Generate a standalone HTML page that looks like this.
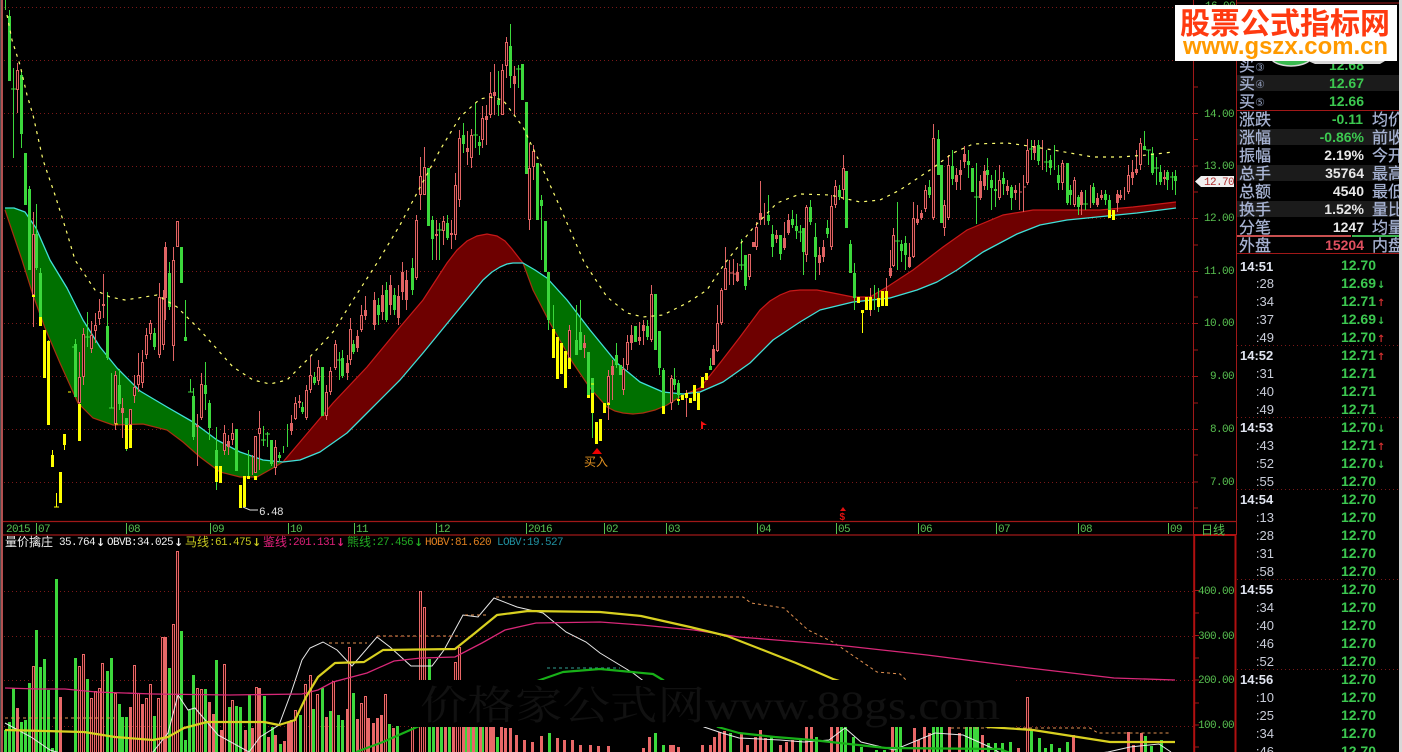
<!DOCTYPE html>
<html lang="zh">
<head>
<meta charset="utf-8">
<title>量价擒庄</title>
<style>
html,body{margin:0;padding:0;background:#000;width:1402px;height:752px;overflow:hidden}
svg{display:block}
text{white-space:pre}
.m{font-family:"Liberation Mono","DejaVu Sans Mono",monospace;font-size:11px;letter-spacing:-.6px}
.ar{font-family:"DejaVu Sans",sans-serif;font-size:11px;font-weight:bold}
.ax{fill:#58c050}
.c{font-family:"Liberation Sans","WenQuanYi Zen Hei","Noto Sans CJK SC",sans-serif;font-size:16px;fill:#a8b4d4;stroke:#a8b4d4;stroke-width:.25px}
.c12{font-family:"Liberation Sans","Noto Sans CJK SC",sans-serif;font-size:12px}
.v{font-family:"Liberation Sans",sans-serif;font-weight:bold;font-size:14px;text-anchor:end}
.t{font-family:"Liberation Sans",sans-serif;font-weight:bold;font-size:13px;fill:#e0e4f0}
.s{font-family:"Liberation Sans",sans-serif;font-size:13px;fill:#c8ccd8;text-anchor:end}
.p{font-family:"Liberation Sans",sans-serif;font-weight:bold;font-size:14px;fill:#3cc850;text-anchor:end}
.ad{font-family:"DejaVu Sans",sans-serif;font-weight:bold;font-size:10px;fill:#3cc850}
.au{font-family:"DejaVu Sans",sans-serif;font-weight:bold;font-size:10px;fill:#d03030}
</style>
</head>
<body>
<svg xmlns="http://www.w3.org/2000/svg" width="1402" height="752" viewBox="0 0 1402 752">
<rect width="1402" height="752" fill="#000"/>

<!-- grid -->
<path d="M4 7.5H1193M4 60.5H1193M4 113.5H1193M4 166.5H1193M4 218.5H1193M4 271.5H1193M4 323.5H1193M4 376.5H1193M4 429.5H1193M4 482.5H1193M4 591.5H1193M4 636.5H1193M4 680.5H1193M4 726.5H1193" stroke="#7a1818" stroke-width="1" stroke-dasharray="1 3" fill="none"/>

<!-- ribbons -->
<polygon fill="#007000" points="5,208 14,208 25,212 36,228 50,260 67,288 83,320 100,347 117,368 140,391 167,407 193,422 217,440 240,452 263,460 283,462 273,468 257,477 240,477 220,472 200,457 183,442 167,430 143,424 113,425 93,418 78,403 60,363 45,328 33,295 22,260 5,210"/>
<polygon fill="#6e0000" points="283,462 300,442 333,403 367,367 400,327 423,300 447,263 457,250 467,241 477,236 487,234 497,236 505,241 512,249 519,258 523,263 513,263 507,264 500,267 492,272 483,280 450,320 423,353 400,380 367,413 347,433 320,452 300,460"/>
<polygon fill="#007000" points="523,263 535,270 547,278 567,300 590,330 617,363 640,382 663,392 683,394 683,395 667,405 655,410 643,413 633,414 623,413 615,411 607,407 590,388 573,363 550,323 533,290"/>
<polygon fill="#6e0000" points="683,395 700,388 720,363 740,337 760,310 770,301 780,295 790,291 800,290 817,290 833,293 853,297 870,297 887,287 913,270 943,247 967,230 1003,215 1033,210 1067,210 1100,210 1133,207 1176,202 1176,208 1137,213 1107,216 1067,220 1040,225 1017,234 983,252 957,270 937,282 917,290 890,298 853,302 820,310 800,322 773,340 750,363 723,382 700,392 683,394"/>
<polyline fill="none" stroke="#a83010" stroke-width="1.2" points="5,210 22,260 33,295 45,328 60,363 78,403 93,418 113,425 143,424 167,430 183,442 200,457 220,472 240,477 257,477 273,468 283,462"/>
<polyline fill="none" stroke="#c81818" stroke-width="1.2" points="283,462 300,442 333,403 367,367 400,327 423,300 447,263 457,250 467,241 477,236 487,234 497,236 505,241 512,249 519,258 523,263"/>
<polyline fill="none" stroke="#a83010" stroke-width="1.2" points="523,263 533,290 550,323 573,363 590,388 607,407 615,411 623,413 633,414 643,413 655,410 667,405 683,395"/>
<polyline fill="none" stroke="#c81818" stroke-width="1.2" points="683,395 700,388 720,363 740,337 760,310 770,301 780,295 790,291 800,290 817,290 833,293 853,297 870,297 887,287 913,270 943,247 967,230 1003,215 1033,210 1067,210 1100,210 1133,207 1176,202"/>
<polyline fill="none" stroke="#40e0d8" stroke-width="1.3" stroke-linejoin="round" points="5,208 14,208 25,212 36,228 50,260 67,288 83,320 100,347 117,368 140,391 167,407 193,422 217,440 240,452 263,460 283,462 300,460 320,452 347,433 367,413 400,380 423,353 450,320 483,280 492,272 500,267 507,264 513,263 523,263 535,270 547,278 567,300 590,330 617,363 640,382 663,392 683,394 700,392 723,382 750,363 773,340 800,322 820,310 853,302 890,298 917,290 937,282 957,270 983,252 1017,234 1040,225 1067,220 1107,216 1137,213 1176,208"/>

<!-- wicks green -->
<path fill="none" stroke="#3cd83c" stroke-width="1" d="M5.5 0V10M9.5 10V81M13.5 68V158M11 89H16M21.5 71V148M29.5 186V270M36.5 204V270M40.5 268V317M48.5 340V350M75.5 339V397M72 347H77M87.5 312V347M85 337H90M107.5 292V360M111.5 373V408M109 408H114M119.5 369V410M126.5 418V451M154.5 328V350M169.5 262V310M185.5 300V340M190.5 379V392M188 392H193M193.5 388V440M205.5 362V410M209.5 400V440M216.5 427V490M248.5 450V476M263.5 426V446M261 440H266M267.5 432V447M265 434H270M271.5 440V466M279.5 452V462M283.5 446V453M287.5 424V447M302.5 402V414M314.5 372V385M339.5 352V380M337 360H342M342.5 350V378M353.5 340V354M374.5 295V330M378.5 298V325M386.5 282V322M394.5 288V315M412.5 258V295M432.5 216V260M439.5 223V260M437 230H442M447.5 215V240M463.5 123V153M475.5 103V148M473 135H478M479.5 136V155M498.5 71V116M510.5 24V88M518.5 65V88M516 69H521M541.5 195V260M548.5 272V330M553.5 305V330M576.5 305V355M580.5 300V350M592.5 378V438M616.5 343V368M635.5 326V342M647.5 320V340M659.5 331V375M663.5 368V414M674.5 368V390M678.5 380V405M710.5 358V370M741.5 239V270M739 265H744M745.5 255V290M768.5 195V225M772.5 225V257M780.5 235V260M792.5 210V228M796.5 214V239M800.5 225V242M798 232H803M803.5 228V275M810.5 200V225M815.5 223V280M827.5 220V238M839.5 185V200M850.5 240V273M854.5 263V310M874.5 285V310M878.5 288V312M897.5 202V270M895 241H900M901.5 240V262M905.5 236V270M929.5 180V198M938.5 130V175M941.5 165V223M952.5 150V185M968.5 150V178M976.5 163V224M974 197H979M987.5 158V190M991.5 175V210M995.5 170V207M1003.5 172V195M1011.5 185V210M1031.5 140V160M1029 149H1034M1038.5 140V165M1046.5 150V172M1044 162H1049M1050.5 155V175M1054.5 145V170M1058.5 165V190M1067.5 163V205M1070.5 185V205M1078.5 195V215M1085.5 190V210M1083 204H1088M1093.5 183V205M1105.5 190V205M1109.5 195V210M1144.5 131V150M1148.5 150V165M1146 150H1151M1152.5 147V175M1156.5 157V185M1154 168H1159M1160.5 165V185M1167.5 170V190M1172.5 172V190M1170 177H1175M1175.5 170V195"/>
<!-- bodies green -->
<path fill="none" stroke="#3cd83c" stroke-width="3" d="M9.5 16V81M21.5 75V134M25.5 153V205M29.5 189V270M36.5 234V268M40.5 273V317M75.5 344V397M107.5 326V358M119.5 385V404M126.5 418V425M154.5 333V347M169.5 273V307M181.5 247V283M185.5 337V341M193.5 396V437M205.5 385V394M209.5 403V428M216.5 450V466M236.5 429V471M271.5 440V464M279.5 455V458M302.5 407V412M314.5 377V383M322.5 367V416M342.5 358V376M353.5 344V352M378.5 305V315M386.5 290V320M394.5 295V310M412.5 268V290M428.5 168V226M432.5 220V239M447.5 223V238M463.5 135V144M479.5 142V146M498.5 100V105M510.5 46V76M522.5 64V100M526.5 102V174M537.5 163V220M541.5 200V206M545.5 221V272M548.5 272V320M576.5 340V355M580.5 332V350M588.5 352V395M592.5 378V395M616.5 355V365M620.5 365V375M635.5 326V342M647.5 326V337M655.5 294V350M659.5 331V368M663.5 370V406M674.5 379V385M678.5 383V395M710.5 366V370M745.5 255V286M768.5 215V221M772.5 234V247M780.5 235V254M792.5 219V225M796.5 226V231M803.5 228V252M810.5 207V222M815.5 237V257M827.5 228V234M839.5 190V197M846.5 171V228M850.5 244V273M854.5 273V298M901.5 244V251M905.5 243V255M929.5 187V195M938.5 139V175M941.5 165V223M952.5 166V179M968.5 161V165M972.5 168V192M987.5 170V175M991.5 180V188M995.5 189V191M1003.5 178V184M1011.5 187V198M1038.5 145V161M1050.5 160V168M1058.5 175V183M1067.5 163V203M1070.5 190V195M1078.5 197V207M1093.5 187V203M1105.5 194V200M1109.5 200V210M1144.5 146V150M1152.5 153V173M1160.5 172V182M1167.5 172V180M1175.5 176V181"/>

<!-- red -->
<path fill="none" stroke="#e06464" stroke-width="1" d="M17.5 63V113M33.5 212V327M79.5 352V412M83.5 328V385M91.5 321V353M95.5 313V343M99.5 299V325M103.5 274V318M115.5 371V430M122.5 398V438M134.5 375V403M138.5 353V392M142.5 350V388M146.5 328V359M150.5 320V340M159.5 283V358M163.5 290V350M165.5 242V320M173.5 247V361M197.5 414V466M201.5 373V420M224.5 425V455M228.5 435V455M232.5 423V445M252.5 455V475M259.5 411V470M275.5 440V475M291.5 415V435M295.5 397V420M299.5 395V408M306.5 385V420M310.5 357V393M318.5 360V385M326.5 385V420M330.5 367V395M335.5 340V370M347.5 355V380M350.5 318V365M357.5 330V352M361.5 305V332M365.5 296V320M374.5 292V330M382.5 285V320M390.5 275V315M398.5 285V325M402.5 262V300M406.5 270V310M416.5 215V280M420.5 157V210M424.5 147V195M436.5 220V260M443.5 216V245M451.5 220V249M455.5 173V240M459.5 130V207M467.5 131V165M471.5 129V168M482.5 106V148M486.5 105V145M490.5 72V118M494.5 64V115M502.5 64V115M506.5 37V78M514.5 66V115M529.5 143V230M533.5 145V180M569.5 325V358M584.5 335V358M608.5 370V420M612.5 360V400M623.5 358V395M627.5 335V370M631.5 325V350M639.5 322V345M643.5 320V345M651.5 285V342M671.5 375V410M686.5 390V417M713.5 345V365M717.5 305V352M721.5 288V325M725.5 247V290M729.5 260V285M733.5 259V285M737.5 263V282M749.5 254V280M756.5 222V250M760.5 181V225M764.5 203V225M776.5 230V243M784.5 222V250M788.5 214V235M806.5 205V262M819.5 247V275M823.5 240V262M831.5 195V250M835.5 180V208M843.5 155V200M870.5 288V316M886.5 278V292M890.5 250V278M893.5 228V267M909.5 243V268M913.5 202V258M917.5 205V225M921.5 210V220M925.5 185V212M933.5 124V220M944.5 200V236M948.5 155V220M956.5 168V190M960.5 160V190M964.5 146V168M980.5 175V200M984.5 165V190M999.5 165V200M1007.5 180V195M1015.5 185V200M1019.5 183V210M1023.5 175V212M1027.5 139V185M1034.5 140V160M1042.5 140V170M1062.5 160V190M1074.5 177V207M1081.5 190V215M1090.5 185V208M1097.5 193V207M1101.5 190V200M1117.5 190V212M1120.5 190V200M1124.5 187V200M1128.5 165V194M1132.5 160V185M1136.5 150V175M1140.5 138V170M1164.5 170V185M729 273H733M733 274H737M1019 192H1022M1023 187H1026"/>
<path fill="none" stroke="#e06464" stroke-width="3" d="M17.5 70V90M33.5 234V295M79.5 377V403M83.5 334V377M91.5 335V349M95.5 325V331M99.5 311V319M103.5 304V306M115.5 375V424M122.5 408V413M130.5 409V425M134.5 387V396M138.5 375V385M142.5 362V383M146.5 335V355M150.5 323V334M159.5 297V355M163.5 297V345M165.5 247V298M173.5 260V346M177.5 221V247M197.5 425V427M201.5 384V418M224.5 433V451M228.5 441V447M232.5 433V440M255.5 436V473M259.5 428V434M275.5 447V468M291.5 423V431M295.5 403V419M299.5 401V403M306.5 390V418M310.5 375V390M318.5 367V381M326.5 392V416M330.5 371V392M335.5 344V368M347.5 363V373M350.5 329V360M357.5 336V348M361.5 315V330M365.5 310V316M374.5 300V325M382.5 295V312M390.5 285V305M398.5 296V318M402.5 272V292M406.5 280V300M416.5 220V278M420.5 176V195M424.5 167V195M436.5 234V236M443.5 221V231M451.5 233V235M455.5 185V235M459.5 138V200M467.5 148V152M471.5 135V158M482.5 118V140M486.5 116V120M490.5 93V115M494.5 92V96M502.5 70V115M506.5 42V66M514.5 76V84M529.5 168V220M533.5 151V167M569.5 330V358M584.5 343V348M608.5 376V403M612.5 366V375M623.5 369V390M627.5 342V365M631.5 335V343M639.5 337V341M643.5 325V331M651.5 294V340M671.5 378V403M713.5 349V365M717.5 323V351M721.5 290V323M725.5 268V290M737.5 272V281M749.5 254V277M753.5 242V247M756.5 227V247M760.5 213V220M776.5 235V239M784.5 238V248M788.5 220V233M806.5 207V255M819.5 255V263M823.5 247V257M831.5 206V247M835.5 186V205M843.5 168V190M890.5 268V276M893.5 235V266M909.5 257V267M913.5 218V257M917.5 219V223M921.5 213V218M925.5 190V209M933.5 138V218M944.5 205V228M948.5 165V218M956.5 175V182M960.5 170V175M964.5 154V162M980.5 181V198M984.5 171V186M999.5 180V198M1007.5 186V191M1015.5 190V193M1027.5 150V183M1034.5 146V153M1062.5 163V183M1074.5 180V205M1081.5 192V205M1097.5 198V205M1101.5 195V198M1117.5 194V203M1120.5 195V198M1128.5 175V192M1132.5 172V178M1136.5 169V173M1140.5 143V165M1164.5 177V179"/>
<path fill="none" stroke="#200000" stroke-width="1" d="M17.5 71V89M33.5 235V294M79.5 378V402M83.5 335V376M91.5 336V348M95.5 326V330M99.5 312V318M115.5 376V423M130.5 410V424M134.5 388V395M138.5 376V384M142.5 363V382M146.5 336V354M150.5 324V333M159.5 298V354M163.5 298V344M173.5 261V345M177.5 222V246M201.5 385V417M224.5 434V450M232.5 434V439M255.5 437V472M259.5 429V433M275.5 448V467M295.5 404V418M306.5 391V417M310.5 376V389M318.5 368V380M326.5 393V415M330.5 372V391M335.5 345V367M350.5 330V359M361.5 316V329M416.5 221V277M420.5 177V194M424.5 168V194M443.5 222V230M455.5 186V234M459.5 139V199M471.5 136V157M482.5 119V139M490.5 94V114M502.5 71V114M506.5 43V65M529.5 169V219M533.5 152V166M569.5 331V357M608.5 377V402M623.5 370V389M627.5 343V364M651.5 295V339M671.5 379V402M717.5 324V350M721.5 291V322M725.5 269V289M749.5 255V276M756.5 228V246M806.5 208V254M831.5 207V246M835.5 187V204M843.5 169V189M893.5 236V265M913.5 219V256M925.5 191V208M933.5 139V217M944.5 206V227M948.5 166V217M999.5 181V197M1027.5 151V182M1062.5 164V182M1074.5 181V204M1128.5 176V191M1140.5 144V164"/>

<!-- yellow -->
<path fill="none" stroke="#ffff00" stroke-width="1" d="M56.5 493V507M54 507H59M64.5 445V450M862.5 310V333M52.5 450V467M68 392H71M115 424H118M591 384H594"/>
<path fill="none" stroke="#ffff00" stroke-width="3" d="M33.5 295V297M40.5 317V326M44.5 330V378M48.5 341V425M52.5 455V467M60.5 472V503M64.5 434V445M79.5 404V441M126.5 425V449M130.5 425V448M216.5 466V482M220.5 466V483M240.5 485V508M244.5 476V507M248.5 476V479M255.5 476V480M553.5 329V358M557.5 337V379M561.5 343V374M565.5 351V388M569.5 358V369M588.5 395V398M592.5 393V413M596.5 422V444M600.5 419V441M604.5 403V413M608.5 403V405M663.5 406V414M678.5 399V401M682.5 395V400M686.5 393V398M690.5 398V403M694.5 385V401M698.5 393V410M702.5 377V388M706.5 373V380M858.5 297V303M862.5 310V313M866.5 297V310M870.5 297V310M878.5 298V307M882.5 291V306M886.5 291V306M1109.5 210V218M1113.5 210V220"/>

<!-- MA dotted -->
<polyline fill="none" stroke="#ffff70" stroke-width="1.2" stroke-dasharray="3 5" points="7,15 12,40 20,65 27,95 33,115 43,160 55,195 67,233 75,260 95,290 110,297 125,300 157,295 177,307 200,330 233,367 253,380 270,384 287,380 307,360 333,332 353,300 377,263 400,225 417,193 440,150 460,117 480,99 490,97 503,100 523,127 540,163 560,207 584,262 607,297 627,313 643,317 663,315 687,303 707,290 725,263 753,228 777,203 800,194 830,195 843,198 860,202 880,200 900,190 930,170 953,153 973,144 1007,143 1022,145 1053,150 1093,157 1120,157 1147,155 1173,152"/>

<!-- markers -->
<path d="M243 507L250 510H258" fill="none" stroke="#e0e0e0"/>
<text class="m" x="259" y="515" fill="#e0e0e0">6.48</text>
<polygon points="597,448 592,454 602,454" fill="#f00000"/>
<text class="c12" x="584" y="466" fill="#e09020">买入</text>
<polygon points="701,421 707,425 703,425 703,429 701,429" fill="#f01010"/>
<polygon points="843,507 840,511 846,511" fill="#e01010"/>
<text x="839.5" y="520" fill="#e01010" font-family="Liberation Sans,sans-serif" font-weight="bold" font-size="10">$</text>

<!-- volume green -->
<path fill="none" stroke="#3cd83c" stroke-width="3" d="M5.5 730V752M9.5 722V752M13.5 688V752M21.5 722V752M25.5 720V752M29.5 683V752M36.5 630V752M40.5 667V752M44.5 659V752M48.5 690V752M52.5 748V752M56.5 579V752M75.5 658V752M87.5 679V752M107.5 671V752M111.5 658V752M119.5 704V752M122.5 717V752M126.5 717V752M154.5 716V752M169.5 668V752M181.5 631V752M185.5 740V752M189.5 710V752M193.5 675V752M205.5 689V752M216.5 660V752M229.5 707V752M236.5 706V752M240.5 707V752M249.5 695V752M264.5 696V752M272.5 727V752M280.5 744V752M300.5 715V752M313.5 709V752M322.5 688V752M330.5 711V752M338.5 715V752M342.5 720V752M353.5 693V752M389.5 724V752M397.5 726V752M429.5 659V752M433.5 680V752M441.5 700V752M449.5 700V752M465.5 690V752M470.5 700V752M476.5 727V752M482.5 727V752M497.5 737V752M549.5 733V752M655.5 733V752M663.5 745V752M730.5 733V752M771.5 737V752M800.5 738V752M816.5 737V752M841.5 726V752M845.5 726V752M853.5 737V752M861.5 747V752M876.5 750V752M884.5 750V752M896.5 726V752M900.5 726V752M933.5 726V752M937.5 726V752M941.5 726V752M966.5 727V752M970.5 727V752M974.5 727V752M977.5 727V752M988.5 743V752M995.5 743V752M1002.5 743V752M1010.5 742V752M1031.5 730V752M1039.5 738V752M1045.5 748V752M1051.5 744V752M1059.5 748V752M1067.5 742V752M1145.5 736V752M1151.5 746V752M1161.5 740V752"/>
<!-- volume red -->
<path fill="none" stroke="#e86868" stroke-width="3" d="M17.5 708V752M33.5 666V752M60.5 697V752M79.5 666V752M83.5 654V752M91.5 698V752M95.5 691V752M99.5 688V752M102.5 663V752M115.5 693V752M130.5 707V752M134.5 665V752M138.5 693V752M142.5 704V752M146.5 698V752M150.5 684V752M158.5 698V752M162.5 637V752M165.5 637V752M173.5 624V752M177.5 551V752M197.5 688V752M201.5 689V752M209.5 702V752M213.5 714V752M221.5 730V752M224.5 664V752M232.5 700V752M245.5 730V752M252.5 728V752M256.5 687V752M259.5 688V752M268.5 737V752M275.5 735V752M284.5 741V752M288.5 722V752M291.5 720V752M295.5 710V752M305.5 684V752M310.5 675V752M317.5 694V752M326.5 717V752M333.5 681V752M347.5 709V752M349.5 647V752M357.5 719V752M361.5 703V752M365.5 696V752M368.5 718V752M373.5 723V752M377.5 718V752M381.5 715V752M385.5 694V752M393.5 728V752M412.5 703V752M420.5 591V752M424.5 607V752M437.5 680V752M445.5 700V752M453.5 700V752M455.5 662V752M459.5 647V752M463.5 700V752M468.5 700V752M473.5 690V752M480.5 700V752M486.5 700V752M490.5 690V752M493.5 690V752M501.5 720V752M505.5 728V752M510.5 728V752M516.5 735V752M524.5 740V752M532.5 742V752M541.5 736V752M557.5 738V752M564.5 740V752M572.5 740V752M580.5 745V752M590.5 745V752M598.5 746V752M608.5 746V752M643.5 748V752M649.5 737V752M670.5 745V752M673.5 745V752M678.5 747V752M702.5 745V752M710.5 745V752M714.5 737V752M719.5 732V752M724.5 731V752M741.5 734V752M747.5 745V752M755.5 737V752M760.5 730V752M765.5 738V752M780.5 745V752M786.5 742V752M792.5 740V752M806.5 726V752M811.5 726V752M831.5 726V752M837.5 726V752M892.5 726V752M914.5 728V752M918.5 740V752M924.5 726V752M929.5 733V752M949.5 726V752M959.5 733V752M982.5 735V752M1018.5 748V752M1027.5 697V752M1073.5 735V752M1128.5 732V752M1133.5 745V752M1141.5 733V752"/>
<path fill="none" stroke="#300000" stroke-width="1" d="M33.5 667V752M79.5 667V752M83.5 655V752M91.5 699V752M95.5 692V752M99.5 689V752M102.5 664V752M115.5 694V752M134.5 666V752M138.5 694V752M146.5 699V752M150.5 685V752M158.5 699V752M162.5 638V752M173.5 625V752M177.5 552V752M197.5 689V752M201.5 690V752M224.5 665V752M232.5 701V752M256.5 688V752M295.5 711V752M305.5 685V752M310.5 676V752M317.5 695V752M333.5 682V752M349.5 648V752M361.5 704V752M365.5 697V752M385.5 695V752M412.5 704V752M420.5 592V752M424.5 608V752M459.5 648V752M455.5 663V752M1027.5 698V752"/>

<!-- volume lines -->
<polyline fill="none" stroke="#e8e8e8" stroke-width="1" points="5,723 31,737 50,750 60,753 150,753 153,752 168,733 178,695 188,710 195,708 218,735 249,752 260,737 279,725 291,693 302,660 310,648 323,642 337,650 352,666 377,637 390,647 411,666 432,666 444,650 463,615 478,617 494,598 517,607 543,613 566,632 586,642 600,653 633,673 704,727 722,733 739,738 780,740 804,742 829,740 845,728 861,742 894,750 935,733 963,735 992,748 1000,753 1100,753 1108,752 1130,747 1159,744 1171,752"/>
<path fill="none" stroke="#e09050" stroke-width="1" stroke-dasharray="3 3" d="M5 718H115M329 643H367M377 636H459M465 615H486M496 597H743L751 603L784 608L808 630L833 642L877 672L900 674L906 680M951 728H1090L1098 733H1171"/>
<path fill="none" stroke="#30a090" stroke-width="1" stroke-dasharray="3 3" d="M547 668H620"/>
<polyline fill="none" stroke="#d82878" stroke-width="1.3" points="5,688 38,689 65,689 96,692 153,694 230,695 302,694 318,690 333,682 367,673 394,661 421,658 455,657 482,643 505,630 536,623 600,622 641,625 694,630 739,637 837,645 927,655 1029,668 1114,678 1175,680"/>
<polyline fill="none" stroke="#d8d020" stroke-width="2.2" stroke-linejoin="round" points="5,730 84,732 115,737 153,740 168,737 184,728 207,722 264,722 279,725 295,720 306,697 318,677 335,663 364,662 383,650 455,649 475,633 497,615 528,611 600,612 641,616 690,627 727,636 763,650 796,663 833,679 988,727 1033,730 1110,742 1175,742"/>
<polyline fill="none" stroke="#18b018" stroke-width="2.2" stroke-linejoin="round" points="356,752 383,742 417,727 540,680 563,672 600,669 653,674 663,680 718,727 739,733 775,737 812,740 886,748 1000,749 1010,753"/>

<!-- mask + watermark -->
<rect x="411" y="680" width="605" height="47" fill="#000"/>
<text x="420" y="719" font-family="Liberation Serif,Noto Serif CJK SC,serif" font-size="40" fill="#111" textLength="580" lengthAdjust="spacingAndGlyphs">价格家公式网www.88gs.com</text>

<!-- frame lines -->
<rect x="0" y="0" width="1" height="752" fill="#505050"/>
<rect x="1" y="0" width="2" height="752" fill="#b05050"/>
<path d="M3 521.5H1236M3 535H1193" stroke="#a01818" stroke-width="1.2" fill="none"/>
<path d="M1193 535H1236" stroke="#b01010" stroke-width="2" fill="none"/>
<path d="M1193.5 0V535M1236.5 0V535" stroke="#a01818" stroke-width="1" fill="none"/>
<path d="M1194.2 535V752M1235.5 535V752" stroke="#b01010" stroke-width="2" fill="none"/>
<path d="M1194 60.5H1198M1194 87H1198M1194 113.5H1198M1194 139.5H1198M1194 166H1198M1194 192H1198M1194 218.5H1198M1194 245H1198M1194 271.5H1198M1194 297H1198M1194 323.5H1198M1194 350H1198M1194 376.5H1198M1194 403H1198M1194 429.5H1198M1194 455H1198M1194 482H1198M1194 508H1198M1195 590.5H1199M1195 613H1199M1195 635.5H1199M1195 658H1199M1195 680H1199M1195 703H1199M1195 725H1199M1195 747H1199" stroke="#a01818" fill="none"/>

<!-- date axis -->
<path d="M36.5 523V534M126.5 523V534M210.5 523V534M288.5 523V534M354.5 523V534M436.5 523V534M526.5 523V534M604.5 523V534M666.5 523V534M757.5 523V534M836.5 523V534M918.5 523V534M996.5 523V534M1078.5 523V534M1168.5 523V534" stroke="#58c050" fill="none"/>
<text class="m ax" x="6" y="532">2015</text><text class="m ax" x="38" y="532">07</text><text class="m ax" x="128" y="532">08</text><text class="m ax" x="212" y="532">09</text><text class="m ax" x="290" y="532">10</text><text class="m ax" x="356" y="532">11</text><text class="m ax" x="438" y="532">12</text><text class="m ax" x="528" y="532">2016</text><text class="m ax" x="606" y="532">02</text><text class="m ax" x="668" y="532">03</text><text class="m ax" x="759" y="532">04</text><text class="m ax" x="838" y="532">05</text><text class="m ax" x="920" y="532">06</text><text class="m ax" x="998" y="532">07</text><text class="m ax" x="1080" y="532">08</text><text class="m ax" x="1170" y="532">09</text>
<text class="c12" x="1201" y="534" fill="#58c050">日线</text>

<!-- y axis labels -->
<text class="m ax" x="1204" y="117">14.00</text><text class="m ax" x="1204" y="169">13.00</text><text class="m ax" x="1204" y="221">12.00</text><text class="m ax" x="1204" y="274">11.00</text><text class="m ax" x="1204" y="326">10.00</text><text class="m ax" x="1210" y="379">9.00</text><text class="m ax" x="1210" y="432">8.00</text><text class="m ax" x="1210" y="485">7.00</text>
<text class="m ax" x="1198" y="594">400.00</text><text class="m ax" x="1198" y="639">300.00</text><text class="m ax" x="1198" y="683">200.00</text><text class="m ax" x="1198" y="728">100.00</text>
<polygon points="1195,181.5 1201,176 1234,176 1234,187 1201,187" fill="#f0f0f0"/>
<text class="m" x="1204" y="185" fill="#b03030">12.70</text>

<!-- indicator title -->
<text class="c12" x="5" y="546" fill="#f0f0f0">量价擒庄</text>
<text class="m" x="59" y="545" fill="#f0f0f0">35.764</text><text class="ar" x="96" y="546" fill="#f0f0f0">↓</text>
<text class="m" x="107" y="545" fill="#f0f0f0">OBVB:34.025</text><text class="ar" x="174" y="546" fill="#f0f0f0">↓</text>
<text class="c12" x="185" y="546" fill="#c8c820">马线</text><text class="m" x="209" y="545" fill="#c8c820">:61.475</text><text class="ar" x="252" y="546" fill="#c8c820">↓</text>
<text class="c12" x="263" y="546" fill="#e0207a">鉴线</text><text class="m" x="287" y="545" fill="#e0207a">:201.131</text><text class="ar" x="336" y="546" fill="#e0207a">↓</text>
<text class="c12" x="347" y="546" fill="#22aa22">熊线</text><text class="m" x="371" y="545" fill="#22aa22">:27.456</text><text class="ar" x="414" y="546" fill="#22aa22">↓</text>
<text class="m" x="425" y="545" fill="#e08020">HOBV:81.620</text>
<text class="m" x="497" y="545" fill="#2090a0">LOBV:19.527</text>

<!-- right panel -->
<rect x="1237" y="75" width="162" height="16" fill="#1b1b1b"/>
<rect x="1237" y="129" width="162" height="16" fill="#1b1b1b"/>
<rect x="1237" y="165" width="162" height="16" fill="#1b1b1b"/>
<rect x="1237" y="201" width="162" height="16" fill="#1b1b1b"/>
<path d="M1237 3H1399M1237 110.5H1399M1237 253.5H1399" stroke="#a01818" fill="none"/>
<rect x="1237" y="235" width="114" height="2" fill="#c85050"/>
<rect x="1352" y="235" width="47" height="2" fill="#3cb850"/>

<text class="c" x="1239" y="71">买</text><text class="c" x="1239" y="89">买</text><text class="c" x="1239" y="107">买</text>
<text x="1255" y="71" font-family="DejaVu Sans,sans-serif" font-size="11" fill="#8f9bb8">③</text>
<text x="1255" y="88" font-family="DejaVu Sans,sans-serif" font-size="11" fill="#8f9bb8">④</text>
<text x="1255" y="106" font-family="DejaVu Sans,sans-serif" font-size="11" fill="#8f9bb8">⑤</text>
<text class="v" x="1364" y="70" fill="#3cc850">12.68</text>
<text class="v" x="1364" y="88" fill="#3cc850">12.67</text>
<text class="v" x="1364" y="106" fill="#3cc850">12.66</text>

<text class="c" x="1239" y="125">涨跌</text><text class="c" x="1239" y="143">涨幅</text><text class="c" x="1239" y="161">振幅</text><text class="c" x="1239" y="179">总手</text><text class="c" x="1239" y="197">总额</text><text class="c" x="1239" y="215">换手</text><text class="c" x="1239" y="233">分笔</text><text class="c" x="1239" y="251">外盘</text>
<text class="v" x="1363" y="124" fill="#3cc850">-0.11</text>
<text class="v" x="1364" y="142" fill="#3cc850">-0.86%</text>
<text class="v" x="1364" y="160" fill="#e8e8e8">2.19%</text>
<text class="v" x="1364" y="178" fill="#e8e8e8">35764</text>
<text class="v" x="1364" y="196" fill="#e8e8e8">4540</text>
<text class="v" x="1364" y="214" fill="#e8e8e8">1.52%</text>
<text class="v" x="1364" y="232" fill="#e8e8e8">1247</text>
<text class="v" x="1364" y="250" fill="#e05060">15204</text>
<text class="c" x="1372" y="125">均价</text><text class="c" x="1372" y="143">前收</text><text class="c" x="1372" y="161">今开</text><text class="c" x="1372" y="179">最高</text><text class="c" x="1372" y="197">最低</text><text class="c" x="1372" y="215">量比</text><text class="c" x="1372" y="233">均量</text><text class="c" x="1372" y="251">内盘</text>

<path d="M1237 345.5H1399M1237 417.5H1399M1237 489.5H1399M1237 579.5H1399M1237 669.5H1399" stroke="#7a1818" stroke-dasharray="1 3" fill="none"/>

<text class="t" x="1240" y="271">14:51</text><text class="p" x="1376" y="270">12.70</text>
<text class="s" x="1274" y="288">:28</text><text class="p" x="1376" y="288">12.69</text><text class="ad" x="1377" y="288">↓</text>
<text class="s" x="1274" y="306">:34</text><text class="p" x="1376" y="306">12.71</text><text class="au" x="1377" y="306">↑</text>
<text class="s" x="1274" y="324">:37</text><text class="p" x="1376" y="324">12.69</text><text class="ad" x="1377" y="324">↓</text>
<text class="s" x="1274" y="342">:49</text><text class="p" x="1376" y="342">12.70</text><text class="au" x="1377" y="342">↑</text>
<text class="t" x="1240" y="360">14:52</text><text class="p" x="1376" y="360">12.71</text><text class="au" x="1377" y="360">↑</text>
<text class="s" x="1274" y="378">:31</text><text class="p" x="1376" y="378">12.71</text>
<text class="s" x="1274" y="396">:40</text><text class="p" x="1376" y="396">12.71</text>
<text class="s" x="1274" y="414">:49</text><text class="p" x="1376" y="414">12.71</text>
<text class="t" x="1240" y="432">14:53</text><text class="p" x="1376" y="432">12.70</text><text class="ad" x="1377" y="432">↓</text>
<text class="s" x="1274" y="450">:43</text><text class="p" x="1376" y="450">12.71</text><text class="au" x="1377" y="450">↑</text>
<text class="s" x="1274" y="468">:52</text><text class="p" x="1376" y="468">12.70</text><text class="ad" x="1377" y="468">↓</text>
<text class="s" x="1274" y="486">:55</text><text class="p" x="1376" y="486">12.70</text>
<text class="t" x="1240" y="504">14:54</text><text class="p" x="1376" y="504">12.70</text>
<text class="s" x="1274" y="522">:13</text><text class="p" x="1376" y="522">12.70</text>
<text class="s" x="1274" y="540">:28</text><text class="p" x="1376" y="540">12.70</text>
<text class="s" x="1274" y="558">:31</text><text class="p" x="1376" y="558">12.70</text>
<text class="s" x="1274" y="576">:58</text><text class="p" x="1376" y="576">12.70</text>
<text class="t" x="1240" y="594">14:55</text><text class="p" x="1376" y="594">12.70</text>
<text class="s" x="1274" y="612">:34</text><text class="p" x="1376" y="612">12.70</text>
<text class="s" x="1274" y="630">:40</text><text class="p" x="1376" y="630">12.70</text>
<text class="s" x="1274" y="648">:46</text><text class="p" x="1376" y="648">12.70</text>
<text class="s" x="1274" y="666">:52</text><text class="p" x="1376" y="666">12.70</text>
<text class="t" x="1240" y="684">14:56</text><text class="p" x="1376" y="684">12.70</text>
<text class="s" x="1274" y="702">:10</text><text class="p" x="1376" y="702">12.70</text>
<text class="s" x="1274" y="720">:25</text><text class="p" x="1376" y="720">12.70</text>
<text class="s" x="1274" y="738">:34</text><text class="p" x="1376" y="738">12.70</text>
<text class="s" x="1274" y="756">:46</text><text class="p" x="1376" y="756">12.70</text>

<!-- right edge strip -->
<rect x="1399" y="0" width="3" height="752" fill="#d8d8d8"/>

<!-- logo -->
<ellipse cx="1291" cy="57" rx="20" ry="9" fill="#3aba50" stroke="#d8d8d8" stroke-width="1.5"/>
<path d="M1308 61H1385L1380 64H1315Z" fill="#d8d8d8"/>
<text class="m ax" x="1205" y="9">16.00</text>
<rect x="1175" y="5" width="222" height="56" fill="#fff"/>
<text x="1180" y="34" font-family="Liberation Sans,Noto Sans CJK SC,sans-serif" font-weight="bold" font-size="30" fill="#ff3a10" textLength="210" lengthAdjust="spacingAndGlyphs">股票公式指标网</text>
<text x="1183" y="54" font-family="Liberation Sans,sans-serif" font-weight="bold" font-size="23.8" fill="#ff9a00" textLength="205" lengthAdjust="spacingAndGlyphs">www.gszx.com.cn</text>
</svg>
</body>
</html>
